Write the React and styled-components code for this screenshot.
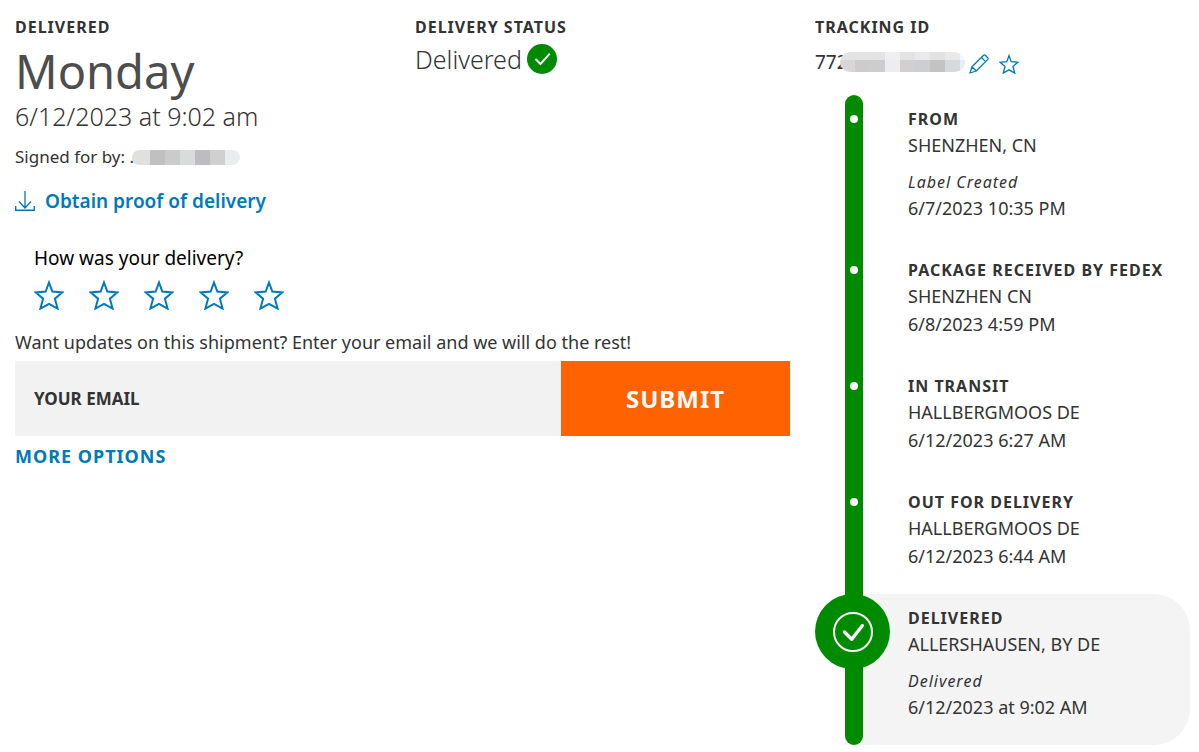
import React, { useState } from 'react';
import styled, { createGlobalStyle } from 'styled-components';

const GlobalStyle = createGlobalStyle`
  * {
    box-sizing: border-box;
  }
  body {
    margin: 0;
    background: #fff;
    color: #333;
    font-family: "Noto Sans", "Open Sans", sans-serif;
  }
`;

const steps = [
  { title: 'From', place: 'SHENZHEN, CN', event: 'Label Created', date: '6/7/2023 10:35 PM' },
  { title: 'Package received by FedEx', place: 'SHENZHEN CN', date: '6/8/2023 4:59 PM' },
  { title: 'In transit', place: 'HALLBERGMOOS DE', date: '6/12/2023 6:27 AM' },
  { title: 'Out for delivery', place: 'HALLBERGMOOS DE', date: '6/12/2023 6:44 AM' },
  { title: 'Delivered', place: 'ALLERSHAUSEN, BY DE', event: 'Delivered', date: '6/12/2023 at 9:02 AM', done: true },
];

// cell colours of the masked texts, row by row
const nameCells = [['#e0e0df', '#c0c0c1', '#cbcbcc', '#dadbdb', '#bdbdc0', '#d0d0d1', '#ebeced']];
const trackingCells = [
  ['#e4e3e3', '#e3e3e3', '#e3e3e3', '#efeff2', '#e3e3e3', '#e9e9e9', '#e2e2e2', '#e9e9e9', '#f4f8fb'],
  ['#d8d7d6', '#cccccd', '#cdcdce', '#ededef', '#d1cfd0', '#cdced0', '#c4c3c3', '#d8d9dc', '#e4eef6'],
];

function Star({ size, stroke }) {
  return (
    <svg width={size} height={size} viewBox="0 0 30 30" fill="none" stroke="currentColor" strokeWidth={stroke} aria-hidden="true">
      <path d="M15 2.5 L18.3 11.6 L28.3 12.4 L20.9 18.7 L23.6 28.6 L15 23.8 L6.4 28.6 L9.1 18.7 L1.7 12.4 L11.7 11.6 Z" />
    </svg>
  );
}

function Redacted({ rows, heights, width, overlap }) {
  return (
    <Mask $width={width} $overlap={overlap}>
      {rows.map((row, i) => (
        <MaskRow key={i} $height={heights[i]}>
          {row.map((color, j) => <MaskCell key={j} $color={color} />)}
        </MaskRow>
      ))}
    </Mask>
  );
}

function Summary() {
  return (
    <Columns>
      <div>
        <Label>Delivered</Label>
        <Day>Monday</Day>
        <Light>6/12/2023 at 9:02 am</Light>
        <Signed>
          Signed for by: .
          <Redacted rows={nameCells} heights={[15]} width={108} overlap={2} />
        </Signed>
        <ProofLink href="#proof">
          <svg width="20" height="20" viewBox="0 0 20 20" fill="none" stroke="currentColor" aria-hidden="true">
            <path d="M10 0v17M4 10.5l6 6.5 6-6.5" strokeWidth="1.3" />
            <path d="M.7 15v4.2h18.6V15" strokeWidth="1.4" />
          </svg>
          Obtain proof of delivery
        </ProofLink>
      </div>
      <div>
        <Label>Delivery status</Label>
        <Status>
          Delivered
          <svg width="30" height="30" viewBox="0 0 30 30" fill="none" aria-hidden="true">
            <circle cx="15" cy="15" r="15" fill="#008a00" />
            <path d="M8.5 15l5 5 9.3-10.3" stroke="#fff" strokeWidth="2" />
          </svg>
        </Status>
      </div>
    </Columns>
  );
}

function Timeline() {
  return (
    <Steps>
      {steps.map((step) => (
        <Step key={step.title} $done={step.done}>
          <Rail>
            {step.done ? (
              <Badge>
                <svg width="75" height="75" viewBox="0 0 75 75" fill="none" stroke="#fff" aria-hidden="true">
                  <circle cx="38" cy="38" r="19" strokeWidth="2" />
                  <path d="M29.5 38l7.2 7.2 10.6-13.5" strokeWidth="3.4" strokeLinecap="round" strokeLinejoin="round" />
                </svg>
              </Badge>
            ) : <Dot />}
          </Rail>
          <StepBody>
            <Label as="h3">{step.title}</Label>
            <Place>{step.place}</Place>
            {step.event && <Event>{step.event}</Event>}
            <Line>{step.date}</Line>
          </StepBody>
        </Step>
      ))}
    </Steps>
  );
}

export default function App() {
  const [email, setEmail] = useState('');
  return (
    <Page>
      <GlobalStyle />
      <div>
        <Summary />
        <Rating>
          <legend>How was your delivery?</legend>
          <Stars>
            {[1, 2, 3, 4, 5].map((n) => (
              <IconButton key={n} type="button" aria-label={`${n} of 5 stars`}>
                <Star size={30} stroke={2} />
              </IconButton>
            ))}
          </Stars>
        </Rating>
        <Prompt htmlFor="email">Want updates on this shipment? Enter your email and we will do the rest!</Prompt>
        <Form onSubmit={(e) => e.preventDefault()}>
          <Email id="email" type="email" placeholder="YOUR EMAIL" value={email} onChange={(e) => setEmail(e.target.value)} />
          <Submit type="submit">SUBMIT</Submit>
        </Form>
        <MoreLink href="#more">More options</MoreLink>
      </div>
      <div>
        <Label>Tracking ID</Label>
        <Tracking>
          <TrackingNumber>772</TrackingNumber>
          <Redacted rows={trackingCells} heights={[8, 12]} width={125} overlap={8} />
          <TrackingActions>
            <IconButton type="button" aria-label="Edit nickname">
              <svg width="20" height="20" viewBox="0 0 20 20" fill="none" stroke="currentColor" strokeWidth="1.3" strokeLinejoin="round" aria-hidden="true">
                <path d="M1 19l2-6.2L14.6 1.2q.8-.6 1.6 0l2.6 2.6q.6.8 0 1.6L7.2 17zM3 12.8L7.2 17M12.4 3.4l4.2 4.2" />
              </svg>
            </IconButton>
            <IconButton type="button" aria-label="Add to watch list">
              <Star size={20} stroke={2} />
            </IconButton>
          </TrackingActions>
        </Tracking>
        <Timeline />
      </div>
    </Page>
  );
}

const Page = styled.main`
  display: grid;
  grid-template-columns: 31fr 15fr;
  column-gap: 25px;
  padding: 17px 9px 6px 15px;
`;
const Columns = styled.section`
  display: grid;
  grid-template-columns: 16fr 15fr;
`;
const Label = styled.h2`
  margin: 0;
  font-size: 16px;
  line-height: 20px;
  font-weight: 700;
  letter-spacing: 1px;
  text-transform: uppercase;
`;
const Day = styled.h1`
  margin: 4px 0 0;
  font-size: 47px;
  line-height: 60px;
  font-weight: 400;
  color: #4d4d4d;
`;
const Light = styled.p`
  margin: 0;
  font-size: 25px;
  line-height: 30px;
  font-weight: 300;
`;
const Signed = styled.p`
  display: flex;
  align-items: center;
  margin: 12px 0 0;
  font-size: 17px;
  line-height: 28px;
`;
const Mask = styled.span`
  display: flex;
  flex-direction: column;
  width: ${(p) => p.$width}px;
  margin-left: -${(p) => p.$overlap}px;
  border-radius: 10px;
  overflow: hidden;
`;
const MaskRow = styled.span`
  display: flex;
  height: ${(p) => p.$height}px;
`;
const MaskCell = styled.span`
  flex: 0 0 15px;
  background: ${(p) => p.$color};
  &:first-child {
    flex-grow: 1;
  }
`;
const ProofLink = styled.a`
  display: flex;
  align-items: center;
  gap: 10px;
  margin-top: 17px;
  color: #007ab7;
  font-size: 19px;
  line-height: 26px;
  font-weight: 600;
  text-decoration: none;
`;
const Status = styled.p`
  display: flex;
  align-items: center;
  gap: 5px;
  margin: 6px 0 0;
  font-size: 25px;
  line-height: 32px;
  font-weight: 300;
`;
const Rating = styled.fieldset`
  margin: 30px 0 0;
  padding: 0 19px;
  border: 0;
  legend {
    padding: 0;
    color: #000;
    font-size: 19px;
    line-height: 28px;
  }
`;
const Stars = styled.div`
  display: flex;
  gap: 25px;
  margin-top: 8px;
`;
const IconButton = styled.button`
  display: flex;
  padding: 0;
  border: 0;
  background: none;
  color: #007ab7;
  cursor: pointer;
`;
const Prompt = styled.label`
  display: block;
  margin-top: 18px;
  font-size: 18px;
  line-height: 28px;
`;
const Form = styled.form`
  display: flex;
  margin-top: 5px;
  height: 75px;
`;
const Email = styled.input`
  flex: 1;
  min-width: 0;
  padding: 0 19px;
  border: 0;
  border-radius: 0;
  background: #f2f2f2;
  color: #333;
  font: 700 17px "Noto Sans", "Open Sans", sans-serif;
  &::placeholder {
    color: #333;
    opacity: 1;
  }
`;
const Submit = styled.button`
  width: 229px;
  border: 0;
  background: #ff6200;
  color: #fff;
  font: 700 24px "Noto Sans", "Open Sans", sans-serif;
  letter-spacing: 1px;
  cursor: pointer;
`;
const MoreLink = styled.a`
  display: inline-block;
  margin-top: 7px;
  color: #007ab7;
  font-size: 18px;
  line-height: 26px;
  font-weight: 700;
  letter-spacing: 1px;
  text-transform: uppercase;
  text-decoration: none;
`;
const Tracking = styled.div`
  display: flex;
  align-items: center;
  height: 30px;
  margin: 10px 0 18px;
`;
const TrackingNumber = styled.span`
  font-size: 19px;
  line-height: 30px;
`;
const TrackingActions = styled.span`
  display: flex;
  gap: 10px;
  padding: 4px 0 0 4px;
`;
const Steps = styled.ol`
  margin: 0 0 0 30px;
  padding: 0;
  list-style: none;
`;
const Rail = styled.div`
  position: relative;
  display: flex;
  justify-content: center;
  width: 18px;
  padding-top: 20px;
  background: #008a00;
`;
const Step = styled.li`
  display: flex;
  border-radius: 0 36px 36px 0;
  background: ${(p) => (p.$done ? '#f4f4f4' : 'none')};
  &:first-child ${Rail} {
    border-radius: 9px 9px 0 0;
  }
  &:last-child ${Rail} {
    border-radius: 0 0 9px 9px;
  }
`;
const Dot = styled.span`
  width: 8px;
  height: 8px;
  border-radius: 50%;
  background: #fff;
`;
const Badge = styled.span`
  position: absolute;
  top: 0;
  left: -30px;
  width: 75px;
  height: 75px;
  border-radius: 50%;
  background: #008a00;
`;
const StepBody = styled.div`
  flex: 1;
  padding: 14px 0 24px 45px;
`;
const Line = styled.p`
  margin: 0;
  font-size: 18px;
  line-height: 28px;
`;
const Place = styled(Line)`
  margin-top: 2px;
`;
const Event = styled.p`
  margin: 11px 0 0;
  font-size: 16px;
  line-height: 24px;
  font-style: italic;
  letter-spacing: 1px;
`;
